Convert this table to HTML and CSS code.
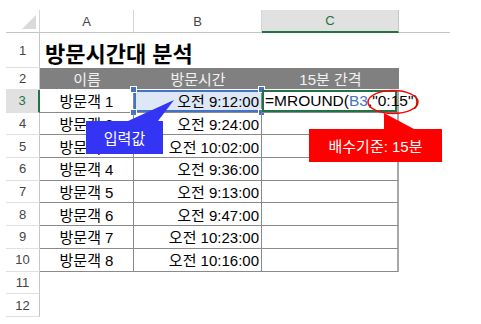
FILE: index.html
```html
<!DOCTYPE html>
<html lang="ko">

<head>
    <meta charset="UTF-8">
    <meta name="viewport" content="width=device-width, initial-scale=1.0">
    <title>방문시간대 분석</title>
    <link rel="stylesheet" href="styles.css">
</head>

<body>
    <div class="sheet">
        <!-- column letters -->
        <div class="corner"><span class="corner-tri"></span></div>
        <div class="col-head">A</div>
        <div class="col-head">B</div>
        <div class="col-head active">C</div>
        <div class="col-head rest"></div>

        <!-- row 1: title -->
        <div class="row-head">1</div>
        <div class="title">방문시간대 분석</div>

        <!-- row 2: table header -->
        <div class="row-head">2</div>
        <div class="th">이름</div>
        <div class="th">방문시간</div>
        <div class="th">15분 간격</div>
        <div class="blank"></div>

        <!-- data rows -->
        <div class="row-head active">3</div>
        <div class="cell name">방문객 1</div>
        <div class="cell time ref">오전 9:12:00
            <i class="handle tl"></i><i class="handle bl"></i><i class="handle tr"></i><i class="handle br"></i>
        </div>
        <div class="cell calc editing">=MROUND(<span class="ref-text">B3</span>,"0:15")<span class="caret"></span></div>
        <div class="blank"></div>

        <div class="row-head">4</div>
        <div class="cell name">방문객 2</div>
        <div class="cell time">오전 9:24:00</div>
        <div class="cell calc"></div>
        <div class="blank"></div>

        <div class="row-head">5</div>
        <div class="cell name">방문객 3</div>
        <div class="cell time">오전 10:02:00</div>
        <div class="cell calc"></div>
        <div class="blank"></div>

        <div class="row-head">6</div>
        <div class="cell name">방문객 4</div>
        <div class="cell time">오전 9:36:00</div>
        <div class="cell calc"></div>
        <div class="blank"></div>

        <div class="row-head">7</div>
        <div class="cell name">방문객 5</div>
        <div class="cell time">오전 9:13:00</div>
        <div class="cell calc"></div>
        <div class="blank"></div>

        <div class="row-head">8</div>
        <div class="cell name">방문객 6</div>
        <div class="cell time">오전 9:47:00</div>
        <div class="cell calc"></div>
        <div class="blank"></div>

        <div class="row-head">9</div>
        <div class="cell name">방문객 7</div>
        <div class="cell time">오전 10:23:00</div>
        <div class="cell calc"></div>
        <div class="blank"></div>

        <div class="row-head">10</div>
        <div class="cell name">방문객 8</div>
        <div class="cell time">오전 10:16:00</div>
        <div class="cell calc"></div>
        <div class="blank"></div>

        <div class="row-head">11</div>
        <div class="blank wide"></div>

        <div class="row-head">12</div>
        <div class="blank wide"></div>

        <!-- callouts drawn over the sheet -->
        <svg class="marks" width="481" height="324" viewBox="0 0 481 324">
            <polygon points="128,121 158,121 174,100" fill="#3434f4" />
            <polygon points="384,113 384,129 414,129" fill="#ff0000" />
            <ellipse cx="393" cy="102" rx="25" ry="11.5" fill="none" stroke="#ff0000" stroke-width="1.4" />
        </svg>
        <div class="callout input-note">입력값</div>
        <div class="callout rule-note">배수기준: 15분</div>
    </div>
</body>

</html>
```

FILE: styles.css
```css
body {
    margin: 0;
    padding: 0;
    background-color: #fff;
    font-family: "Liberation Sans", "Noto Sans CJK KR", sans-serif;
    color: #000;
}

.sheet {
    position: relative;
    width: 481px;
    height: 324px;
    padding: 10px 0 0 6px;
    box-sizing: border-box;
    display: grid;
    grid-template-columns: 34px 94px 128px 137px 51px;
    grid-template-rows: 23px 35px 22px repeat(10, 22.7px);
}

/* column letters */
.corner {
    position: relative;
    border-bottom: 1px solid #c4c4c4;
    border-right: 1px solid #d4d4d4;
}

.corner-tri {
    position: absolute;
    right: 3px;
    bottom: 3px;
    width: 0;
    height: 0;
    border-left: 14px solid transparent;
    border-bottom: 14px solid #dadada;
}

.col-head {
    display: flex;
    align-items: center;
    justify-content: center;
    font-size: 13px;
    color: #444;
    border-right: 1px solid #d4d4d4;
    border-bottom: 1px solid #c4c4c4;
}

.col-head.active {
    background-color: #e1e1e1;
    color: #217346;
    border-right-color: #c6c6c6;
    border-bottom: 2px solid #217346;
}

.col-head.rest {
    border-right: none;
}

/* row numbers */
.row-head {
    display: flex;
    align-items: center;
    justify-content: center;
    font-size: 13px;
    color: #444;
    border-right: 1px solid #c6c6c6;
    border-bottom: 1px solid #e1e1e1;
}

.row-head.active {
    background-color: #e1e1e1;
    color: #217346;
    border-right: 2px solid #217346;
}

.title {
    grid-column: span 4;
    display: flex;
    align-items: center;
    padding: 2px 0 0 5px;
    font-size: 22px;
    font-weight: bold;
}

.th {
    display: flex;
    align-items: center;
    justify-content: center;
    background-color: #808080;
    color: #f2f2f2;
    font-size: 15px;
    border-bottom: 1px solid #fff;
}

.blank.wide {
    grid-column: span 4;
}

/* table cells */
.cell {
    position: relative;
    display: flex;
    align-items: center;
    font-size: 15px;
    white-space: nowrap;
    border-right: 1px solid #8a8a8a;
    border-bottom: 1px solid #8a8a8a;
}

.cell.name {
    justify-content: center;
}

.cell.time {
    justify-content: flex-end;
    padding-right: 2px;
}

.cell.calc {
    padding-left: 3px;
    font-size: 15.5px;
    border-right: 2px solid #a8a8a8;
}

/* referenced cell while the formula is edited */
.cell.ref {
    background-color: #dde7f5;
    box-shadow: inset 2px 2px 0 #4472c4, inset 0 -2px 0 #4472c4;
}

.handle {
    position: absolute;
    width: 5px;
    height: 5px;
    background-color: #4472c4;
    border: 1px solid #fff;
}

.handle.tl { left: -4px; top: -4px; }
.handle.bl { left: -4px; bottom: -4px; }
.handle.tr { right: -4px; top: -4px; }
.handle.br { right: -4px; bottom: -4px; }

.cell.editing {
    z-index: 1;
    overflow: visible;
    box-shadow: inset 0 0 0 2px #217346;
}

.ref-text {
    color: #4472c4;
}

.caret {
    display: inline-block;
    width: 1px;
    height: 19px;
    margin-left: 1px;
    background-color: #000;
}

/* annotations */
.marks {
    position: absolute;
    left: 0;
    top: 0;
    z-index: 2;
    pointer-events: none;
}

.callout {
    position: absolute;
    z-index: 2;
    display: flex;
    align-items: center;
    justify-content: center;
    color: #fff;
    font-size: 15px;
}

.input-note {
    left: 86px;
    top: 121px;
    width: 77px;
    height: 33px;
    background-color: #3434f4;
}

.rule-note {
    left: 309px;
    top: 129px;
    width: 133px;
    height: 33px;
    background-color: #ff0000;
}
```
